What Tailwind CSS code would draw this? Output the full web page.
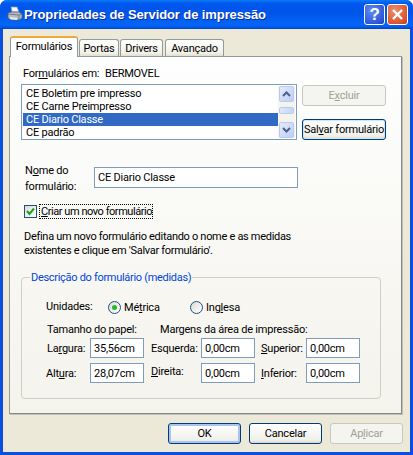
<!DOCTYPE html>
<html lang="pt">
<head>
  <meta charset="UTF-8" />
  <title>Propriedades de Servidor de impressão</title>
  <script src="https://cdn.jsdelivr.net/npm/@tailwindcss/browser@4"></script>
</head>
<body class="bg-white">
  <div class="w-[413px] h-[455px] overflow-hidden rounded-t-[7px] flex flex-col bg-[#0a4fe0] font-['Roboto',sans-serif] text-[11px] tracking-[-0.22px] leading-[13px] text-black whitespace-nowrap">

    <!-- title bar -->
    <div class="h-[29px] shrink-0 flex items-center pl-[6px] pr-[5px] bg-[linear-gradient(180deg,#0a7bf5_0%,#0058ee_12%,#0054e8_45%,#0466f8_85%,#0058e8_94%,#0040d0_100%)]">
      <svg class="w-[17px] h-[17px] mr-[1px]" viewBox="0 0 17 17">
        <path d="M5 1h6l2 5H6z" fill="#f4f6f8" stroke="#8a96a8" stroke-width=".7"/>
        <path d="M2 7l3-1h8l3 2v4l-3 2H5l-3-2z" fill="#b4bcc4" stroke="#59626e" stroke-width=".8"/>
        <path d="M2 8l11 1 3-1M13 9v5" fill="none" stroke="#59626e" stroke-width=".7"/>
        <path d="M4 11l7 1v2l-7-1z" fill="#e8ecef"/>
      </svg>
      <span class="font-['Liberation_Sans',sans-serif] font-bold text-[13px] text-white tracking-[-0.1px] [text-shadow:1px_1px_0_#0f2f9c]">Propriedades de Servidor de impressão</span>
      <div class="ml-auto flex gap-[2px]">
        <div class="w-[21px] h-[21px] rounded-[3px] border border-white flex items-center justify-center bg-[radial-gradient(circle_at_35%_30%,#5f8df0,#2c55d8_75%,#2140b8)]">
          <span class="font-['Liberation_Sans',sans-serif] font-bold text-[17px] text-white">?</span>
        </div>
        <div class="w-[21px] h-[21px] rounded-[3px] border border-white flex items-center justify-center bg-[radial-gradient(circle_at_35%_30%,#ec8d6c,#dc5530_70%,#c23a18)]">
          <svg class="w-[13px] h-[13px]" viewBox="0 0 13 13"><path d="M2 2l9 9M11 2l-9 9" stroke="#fff" stroke-width="2.4" fill="none"/></svg>
        </div>
      </div>
    </div>

    <!-- client area -->
    <div class="h-[423px] shrink-0 mx-[3px] bg-[#ece9d8] pt-[7px] px-[6px]">

      <!-- tabs -->
      <div class="h-[20px] flex items-end gap-[1px] relative z-10 pl-[1px]">
        <div class="w-[68px] h-[21px] -mb-[1px] rounded-t-[3px] bg-white border-x border-[#919b9c] border-t-[2px] border-t-[#f2a93b] flex items-center justify-center pb-[2px]">Formulários</div>
        <div class="w-[40px] h-[17px] rounded-t-[3px] bg-[linear-gradient(180deg,#fff,#f2f1ea_80%,#e2dfd0)] border border-b-0 border-[#919b9c] flex items-center justify-center">Portas</div>
        <div class="w-[43px] h-[17px] rounded-t-[3px] bg-[linear-gradient(180deg,#fff,#f2f1ea_80%,#e2dfd0)] border border-b-0 border-[#919b9c] flex items-center justify-center">Drivers</div>
        <div class="w-[59px] h-[17px] ml-[1px] rounded-t-[3px] bg-[linear-gradient(180deg,#fff,#f2f1ea_80%,#e2dfd0)] border border-b-0 border-[#919b9c] flex items-center justify-center">Avançado</div>
      </div>

      <!-- panel -->
      <div class="w-[393px] h-[358px] border border-[#919b9c] border-r-[#7f8a8c] border-b-[#7f8a8c] shadow-[1px_1px_0_#c4c1b0] bg-[linear-gradient(180deg,#fefefe,#f4f3ec)] pl-[11px] pt-[10px]">

        <div class="flex h-[13px] pl-[2px]">
          <span class="w-[82px]">For<u>m</u>ulários em:</span>
          <span>BERMOVEL</span>
        </div>

        <div class="flex mt-[4px]">
          <!-- list -->
          <div class="w-[276px] h-[56px] border border-[#7f9db9] bg-white flex p-[1px]">
            <ul class="flex-1 pt-[1px]">
              <li class="h-[13px] pl-[3px]">CE Boletim pre impresso</li>
              <li class="h-[13px] pl-[3px]">CE Carne Preimpresso</li>
              <li class="h-[13px] pl-[3px] bg-[#316ac5] text-white">CE Diario Classe</li>
              <li class="h-[13px] pl-[3px]">CE padrão</li>
            </ul>
            <div class="w-[17px] flex flex-col bg-[#f5f4ea] px-[1px]">
              <div class="h-[16px] rounded-[2px] border border-[#b8caf0] bg-[linear-gradient(135deg,#e4ebfd,#bccdf7)] flex items-center justify-center">
                <svg class="w-[9px] h-[6px]" viewBox="0 0 9 6"><path d="M1 5l3.5-3.5L8 5" fill="none" stroke="#4d6185" stroke-width="2"/></svg>
              </div>
              <div class="h-[7px] mt-[5px] rounded-[2px] border border-[#b8caf0] bg-[linear-gradient(90deg,#dfe8fd,#c5d4f8)]"></div>
              <div class="h-[16px] mt-auto rounded-[2px] border border-[#b8caf0] bg-[linear-gradient(135deg,#e4ebfd,#bccdf7)] flex items-center justify-center">
                <svg class="w-[9px] h-[6px]" viewBox="0 0 9 6"><path d="M1 1l3.5 3.5L8 1" fill="none" stroke="#4d6185" stroke-width="2"/></svg>
              </div>
            </div>
          </div>
          <!-- side buttons -->
          <div class="ml-[5px] flex flex-col pt-[1px]">
            <button class="w-[84px] h-[21px] rounded-[3px] border border-[#c9c7ba] bg-[#f4f4f0] text-[#a1a192]">E<u>x</u>cluir</button>
            <button class="w-[84px] h-[21px] mt-[13px] rounded-[3px] border border-[#003c74] bg-[linear-gradient(180deg,#fff,#f0f0ea_85%,#d8d4c8)] shadow-[inset_0_0_0_1px_#cee7ff]">Sal<u>v</u>ar formulário</button>
          </div>
        </div>

        <!-- name -->
        <div class="flex h-[21px] mt-[27px] ml-[4px]">
          <label class="w-[69px] -mt-[4px] leading-[16px]">N<u>o</u>me do<br>formulário:</label>
          <div class="w-[204px] h-[21px] border border-[#7f9db9] bg-white pl-[3px] flex items-center">CE Diario Classe</div>
        </div>

        <!-- checkbox -->
        <div class="flex items-center mt-[16px] ml-[3px]">
          <span class="w-[13px] h-[13px] border border-[#1c5180] bg-[linear-gradient(135deg,#dcdcd7,#fff)] flex items-center justify-center">
            <svg class="w-[9px] h-[9px]" viewBox="0 0 9 9"><path d="M1 4l2.5 3L8 1.5" fill="none" stroke="#21a121" stroke-width="2"/></svg>
          </span>
          <span class="ml-[2px] h-[15px] w-[114px] pl-[1px] border border-dotted border-black flex items-center tracking-[-0.45px]"><span><u>C</u>riar um novo formulário</span></span>
        </div>

        <p class="mt-[11px] ml-[3px] leading-[14px] tracking-[-0.3px]">Defina um novo formulário editando o nome e as medidas<br>existentes e clique em 'Salvar formulário'.</p>

        <!-- group -->
        <fieldset class="w-[360px] h-[128px] mt-[13px] border border-[#d0d0bf] rounded-[4px] pl-[24px] relative">
          <legend class="-ml-[16px] px-[1px] text-[#0046d5] tracking-[-0.3px]">Descrição do formulário (medidas)</legend>

          <div class="flex items-center mt-[16px] h-[14px]">
            <span class="w-[62px] -mt-[1px]">Unidades:</span>
            <span class="w-[13px] h-[13px] rounded-full border border-[#1c5180] bg-[linear-gradient(135deg,#dcdcd7,#fff)] flex items-center justify-center"><span class="w-[5px] h-[5px] rounded-full bg-[#2fb52f]"></span></span>
            <span class="ml-[3px] w-[66px] mt-[1px]">Mé<u>t</u>rica</span>
            <span class="w-[13px] h-[13px] rounded-full border border-[#1c5180] bg-[linear-gradient(135deg,#dcdcd7,#fff)]"></span>
            <span class="ml-[3px]">Ing<u>l</u>esa</span>
          </div>

          <div class="flex mt-[9px] h-[13px] pl-[1px]">
            <span class="w-[113px]">Tamanho do papel:</span>
            <span>Margens da área de impressão:</span>
          </div>

          <div class="grid grid-cols-[43px_54px_7px_50px_54px_6px_45px_54px] grid-rows-[20px_20px] gap-y-[5px] items-center mt-[2px] pl-[1px]">
            <span>La<u>r</u>gura:</span>
            <div class="h-[20px] border border-[#7f9db9] bg-white pl-[3px] flex items-center">35,56cm</div>
            <span></span>
            <span>Esquerda:</span>
            <div class="h-[20px] border border-[#7f9db9] bg-white pl-[3px] flex items-center">0,00cm</div>
            <span></span>
            <span><u>S</u>uperior:</span>
            <div class="h-[20px] border border-[#7f9db9] bg-white pl-[3px] flex items-center">0,00cm</div>

            <span class="-ml-[1px]">Alt<u>u</u>ra:</span>
            <div class="h-[20px] border border-[#7f9db9] bg-white pl-[3px] flex items-center">28,07cm</div>
            <span></span>
            <span class="-mt-[3px]"><u>D</u>ireita:</span>
            <div class="h-[20px] border border-[#7f9db9] bg-white pl-[3px] flex items-center">0,00cm</div>
            <span></span>
            <span><u>I</u>nferior:</span>
            <div class="h-[20px] border border-[#7f9db9] bg-white pl-[3px] flex items-center">0,00cm</div>
          </div>
        </fieldset>
      </div>

      <!-- dialog buttons -->
      <div class="flex justify-end gap-[8px] mt-[9px] pr-[1px]">
        <button class="w-[73px] h-[21px] rounded-[3px] border border-[#003c74] bg-[linear-gradient(180deg,#fff,#f0f0ea_85%,#d8d4c8)] shadow-[inset_0_0_0_2px_#a9c4f0]">OK</button>
        <button class="w-[73px] h-[21px] rounded-[3px] border border-[#003c74] bg-[linear-gradient(180deg,#fff,#f0f0ea_85%,#d8d4c8)]">Cancelar</button>
        <button class="w-[73px] h-[21px] rounded-[3px] border border-[#c9c7ba] bg-[#f4f4f0] text-[#a1a192]">Ap<u>l</u>icar</button>
      </div>
    </div>
  </div>
</body>
</html>
